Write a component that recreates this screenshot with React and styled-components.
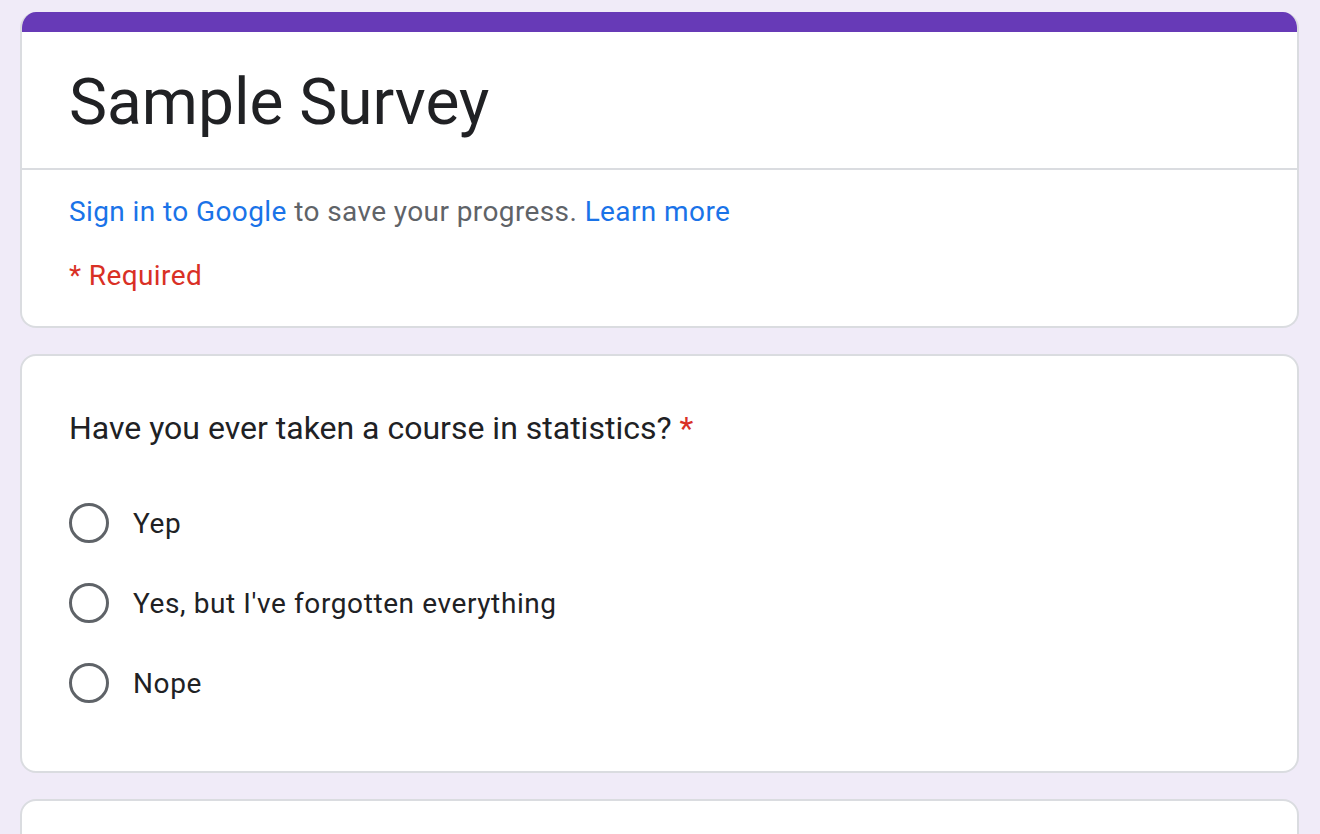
import React from "react";
import styled, { createGlobalStyle } from "styled-components";

const Global = createGlobalStyle`
  html, body { margin: 0; padding: 0; background: #f0ebf8; }
  body { font-family: Roboto, "Noto Sans", Arial, sans-serif; color: #202124; }
`;

const Page = styled.div`
  display: flex;
  flex-direction: column;
  gap: 26px;
  padding: 12px 21px 0 20px;
  height: 834px;
  box-sizing: border-box;
  overflow: hidden;
`;

const Card = styled.div`
  background: #fff;
  border: 2px solid #dadce0;
  border-radius: 16px;
  flex-shrink: 0;
  overflow: hidden;
  box-sizing: border-box;
`;

const HeaderCard = styled(Card)`
  border-top: none;
`;

const TopBar = styled.div`
  height: 20px;
  background: #673ab7;
  margin: 0 -2px;
`;

const TitleArea = styled.div`
  padding: 35px 47px 29px;
  border-bottom: 2px solid #dadce0;
`;

const Title = styled.h1`
  margin: 0;
  font-size: 64px;
  font-weight: 400;
  line-height: 72px;
  color: #202124;
`;

const InfoArea = styled.div`
  padding: 26px 47px 34px;
  display: flex;
  flex-direction: column;
  gap: 32px;
`;

const InfoLine = styled.div`
  font-size: 28px;
  line-height: 32px;
  letter-spacing: 0.4px;
  color: #5f6368;
`;

const Link = styled.a`
  color: #1a73e8;
  text-decoration: none;
`;

const RequiredNote = styled.div`
  font-size: 28px;
  line-height: 32px;
  letter-spacing: 0.4px;
  color: #d93025;
`;

const QuestionCard = styled(Card)`
  padding: 50px 47px 44px;
  height: 419px;
`;

const QuestionText = styled.div`
  font-size: 32px;
  line-height: 44px;
  color: #202124;
  margin-bottom: 33px;
`;

const Star = styled.span`
  color: #d93025;
  padding-left: 8px;
`;

const Options = styled.div`
  display: flex;
  flex-direction: column;
`;

const Option = styled.label`
  display: flex;
  align-items: center;
  gap: 24px;
  height: 80px;
  font-size: 28px;
  letter-spacing: 0.6px;
  color: #202124;
`;

const Radio = styled.span`
  width: 40px;
  height: 40px;
  box-sizing: border-box;
  border: 3px solid #5f6368;
  border-radius: 50%;
  flex-shrink: 0;
`;

const EmptyCard = styled(Card)`
  height: 80px;
`;

export default function App() {
  const opts = ["Yep", "Yes, but I've forgotten everything", "Nope"];
  return (
    <>
      <Global />
      <Page>
        <HeaderCard>
          <TopBar />
          <TitleArea>
            <Title>Sample Survey</Title>
          </TitleArea>
          <InfoArea>
            <InfoLine>
              <Link>Sign in to Google</Link> to save your progress.{" "}
              <Link>Learn more</Link>
            </InfoLine>
            <RequiredNote>* Required</RequiredNote>
          </InfoArea>
        </HeaderCard>
        <QuestionCard>
          <QuestionText>
            Have you ever taken a course in statistics?<Star>*</Star>
          </QuestionText>
          <Options>
            {opts.map((o) => (
              <Option key={o}>
                <Radio />
                {o}
              </Option>
            ))}
          </Options>
        </QuestionCard>
        <EmptyCard />
      </Page>
    </>
  );
}
